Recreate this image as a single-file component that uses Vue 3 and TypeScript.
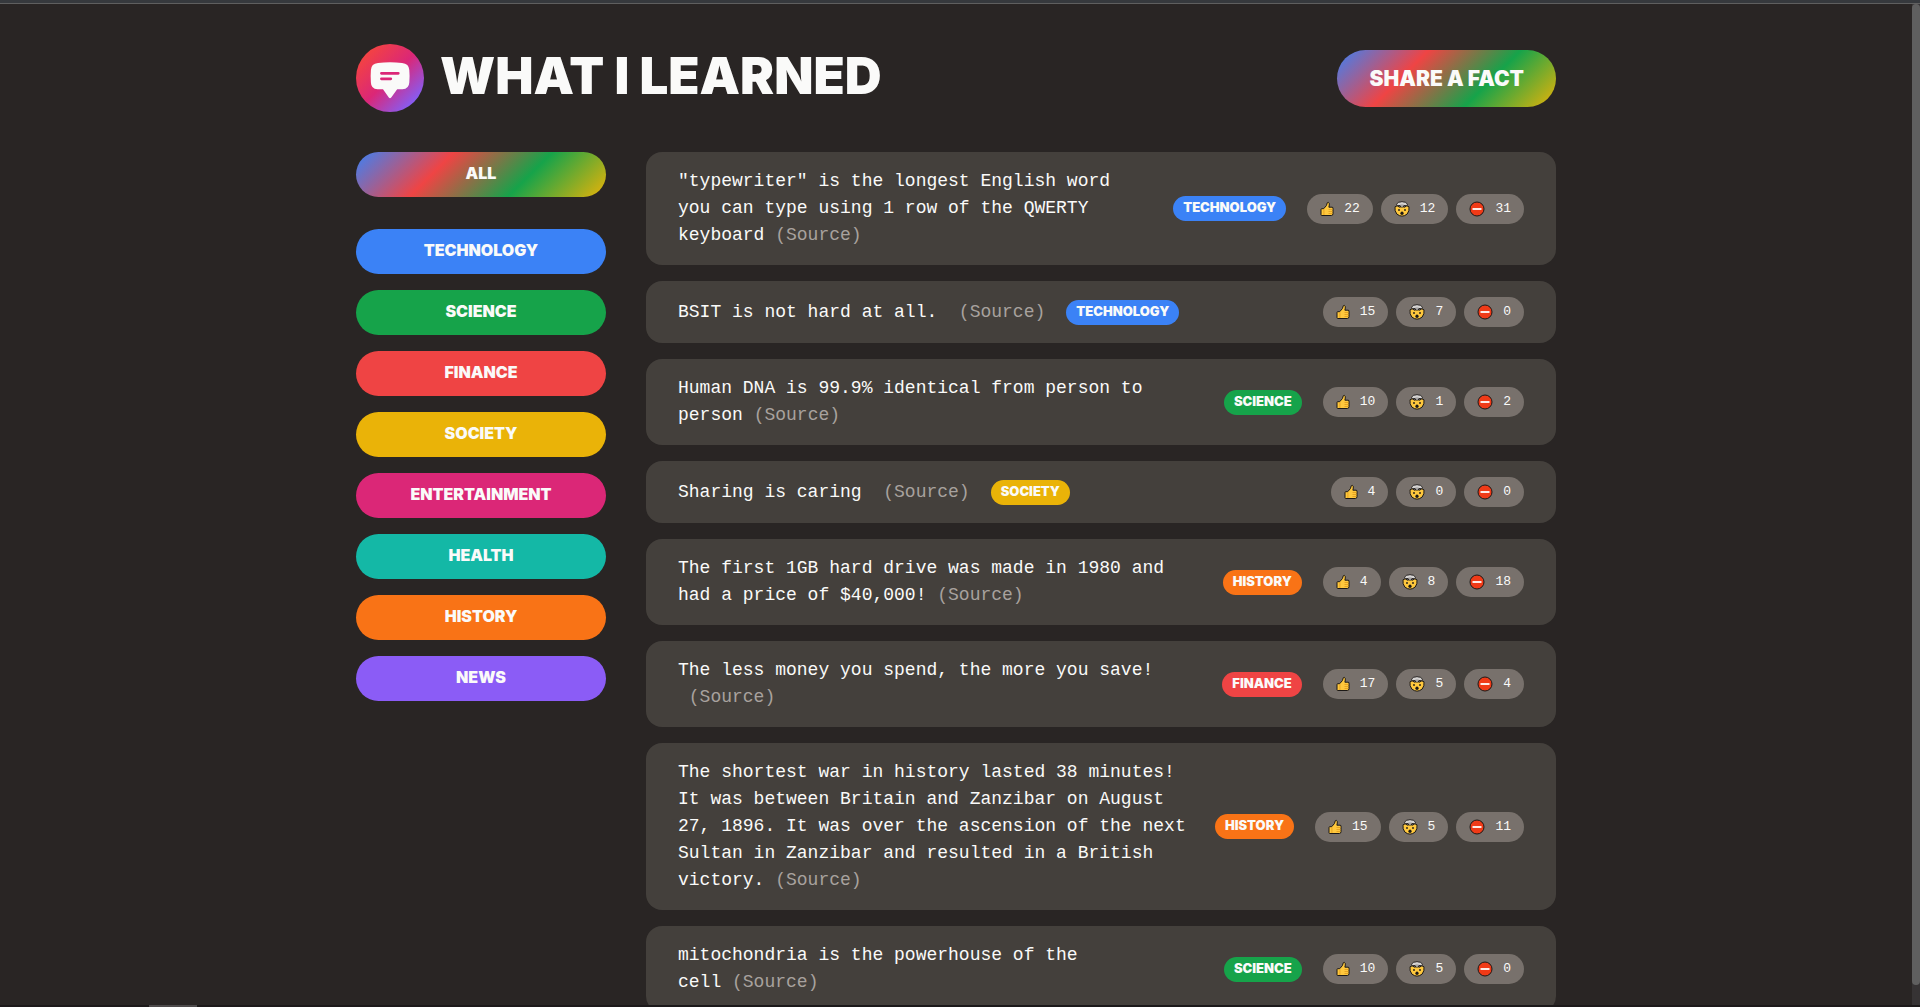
<script setup lang="ts">
import { computed, ref } from 'vue'

type VoteKind = 'like' | 'wow' | 'wrong'

interface Category {
  name: string
  color: string
}

interface Fact {
  id: number
  text: string
  category: string
  votes: Record<VoteKind, number>
}

const categories: Category[] = [
  { name: 'technology', color: '#3b82f6' },
  { name: 'science', color: '#16a34a' },
  { name: 'finance', color: '#ef4444' },
  { name: 'society', color: '#eab308' },
  { name: 'entertainment', color: '#db2777' },
  { name: 'health', color: '#14b8a6' },
  { name: 'history', color: '#f97316' },
  { name: 'news', color: '#8b5cf6' },
]

const kinds: { kind: VoteKind; label: string }[] = [
  { kind: 'like', label: 'Interesting' },
  { kind: 'wow', label: 'Mind-blowing' },
  { kind: 'wrong', label: 'False' },
]

const facts = ref<Fact[]>([
  {
    id: 1,
    text: '"typewriter" is the longest English word you\u00a0can type using 1 row of the QWERTY keyboard ',
    category: 'technology',
    votes: { like: 22, wow: 12, wrong: 31 },
  },
  { id: 2, text: 'BSIT is not hard at all. \u00a0', category: 'technology', votes: { like: 15, wow: 7, wrong: 0 } },
  {
    id: 3,
    text: 'Human DNA is 99.9% identical from person to person ',
    category: 'science',
    votes: { like: 10, wow: 1, wrong: 2 },
  },
  { id: 4, text: 'Sharing is caring \u00a0', category: 'society', votes: { like: 4, wow: 0, wrong: 0 } },
  {
    id: 5,
    text: 'The first 1GB hard drive was made in 1980 and had\u00a0a price of $40,000! ',
    category: 'history',
    votes: { like: 4, wow: 8, wrong: 18 },
  },
  {
    id: 6,
    text: 'The less money you spend, the more you save! \u00a0',
    category: 'finance',
    votes: { like: 17, wow: 5, wrong: 4 },
  },
  {
    id: 7,
    text: 'The shortest war in history lasted 38 minutes! It was between Britain and Zanzibar on August 27, 1896. It was over the ascension of the next Sultan in Zanzibar and resulted in a British victory. ',
    category: 'history',
    votes: { like: 15, wow: 5, wrong: 11 },
  },
  {
    id: 8,
    text: 'mitochondria is the powerhouse of the cell\u00a0',
    category: 'science',
    votes: { like: 10, wow: 5, wrong: 0 },
  },
])

const current = ref('all')
const visibleFacts = computed(() =>
  current.value === 'all' ? facts.value : facts.value.filter((f) => f.category === current.value),
)

function colorOf(name: string): string {
  return categories.find((c) => c.name === name)?.color ?? '#78716c'
}
</script>

<template>
  <div class="window">
    <div class="top-edge"></div>
    <div class="viewport">
      <div class="page">
        <div class="container">
          <header class="header">
            <div class="brand">
              <svg class="logo" viewBox="0 0 68 68" aria-hidden="true">
                <defs>
                  <linearGradient id="logo-fill" x1="0.12" y1="0.12" x2="0.88" y2="0.88">
                    <stop offset="0" stop-color="#f5443f" />
                    <stop offset="0.5" stop-color="#db2777" />
                    <stop offset="1" stop-color="#8160fb" />
                  </linearGradient>
                </defs>
                <circle cx="34" cy="34" r="34" fill="url(#logo-fill)" />
                <path
                  fill="#fafaf9"
                  d="M22 18.9Q34 17.700 46 18.900Q53 19.500 53.300 26Q53.900 32 53.300 38.500Q53 44.800 46.500 45.300H41.200L35.200 53.500Q34 55 32.800 53.500L27 45.300H21.500Q15 44.800 14.900 38.500Q14.400 32 14.900 26Q15.200 19.500 22 18.900Z"
                />
                <path stroke="#db2777" stroke-width="2.700" stroke-linecap="round" d="M25.400 29.300H42.300M25.400 34.800H34.800" />
              </svg>
              <h1>WHAT I LEARNED</h1>
            </div>
            <button type="button" class="rainbow share">SHARE A FACT</button>
          </header>

          <main class="main">
            <aside class="sidebar">
              <button type="button" class="rainbow pill" @click="current = 'all'">ALL</button>
              <ul class="category-list">
                <li v-for="c in categories" :key="c.name">
                  <button type="button" class="pill" :style="{ backgroundColor: c.color }" @click="current = c.name">
                    {{ c.name.toUpperCase() }}
                  </button>
                </li>
              </ul>
            </aside>

            <ul class="facts">
              <li v-for="f in visibleFacts" :key="f.id" class="fact">
                <p>{{ f.text }}<a href="#source">(Source)</a></p>
                <span class="tag" :style="{ backgroundColor: colorOf(f.category) }">{{ f.category.toUpperCase() }}</span>
                <div class="votes">
                  <button
                    v-for="k in kinds"
                    :key="k.kind"
                    type="button"
                    class="vote"
                    :aria-label="k.label"
                    @click="f.votes[k.kind]++"
                  >
                    <svg v-if="k.kind === 'like'" class="thumb" viewBox="0 0 14 16" aria-hidden="true">
                      <path
                        d="M1 8.500Q1 7.700 1.800 7.700H3.700L6.400 4.600L7.300 1.700Q8.400 .7 9.200 2.200Q9.600 3.700 8.900 6.200H12.100Q13.500 6.400 13 7.800V12.700Q13 14.500 11.300 14.500H1.800Q1 14.500 1 13.700Z"
                        fill="#ffc83d"
                        stroke="#1c1917"
                        stroke-linejoin="round"
                      />
                      <path d="M3.900 8.200V14M8.500 8.500H12.500M8.500 10.500H12.500M8.500 12.500H12.300" stroke="#e09b1c" stroke-width=".8" fill="none" />
                    </svg>
                    <svg v-else-if="k.kind === 'wow'" class="face" viewBox="0 0 16 16" aria-hidden="true">
                      <path
                        d="M1 5.800L3.200 4.800L5.500 6.200L8 5.200L10.500 6.200L12.800 4.800L15 5.800Q15.600 10 13.200 13Q8 17.300 2.800 13Q.4 10 1 5.800Z"
                        fill="#ffc83d"
                        stroke="#1c1917"
                        stroke-linejoin="round"
                      />
                      <path
                        d="M3.200 4.700Q1.900 3.500 3.500 2.300Q4.300 .7 6 1.100Q8 .1 10 1.100Q11.800 .7 12.500 2.300Q14.100 3.500 12.800 4.700L9.800 4.500L9.300 6H6.700L6.200 4.500Z"
                        fill="#d5d3d2"
                        stroke="#1c1917"
                        stroke-width=".9"
                      />
                      <path d="M6 3.600H10L8.700 4.300V6H7.300V4.300Z" fill="#9a9897" />
                      <circle cx="5" cy="9" r=".9" fill="#1c1917" />
                      <circle cx="11" cy="9" r=".9" fill="#1c1917" />
                      <ellipse cx="8" cy="12.300" rx="1.600" ry="1.700" fill="#1c1917" />
                    </svg>
                    <svg v-else class="face" viewBox="0 0 16 16" aria-hidden="true">
                      <circle cx="8" cy="8" r="7" fill="#f03a17" stroke="#1c1917" />
                      <path d="M3.500 8H12.500" stroke="#fff" stroke-width="1.800" />
                    </svg>
                    <span>{{ f.votes[k.kind] }}</span>
                  </button>
                </div>
              </li>
            </ul>
          </main>
        </div>
      </div>
      <div class="scroll-track"><div class="scroll-thumb"></div></div>
    </div>
    <div class="bottom-edge"><div class="bottom-mark"></div></div>
  </div>
</template>

<style>
body {
  background: #292524;
}
</style>

<style scoped>
.window {
  display: flex;
  flex-direction: column;
  height: 100vh;
  overflow: hidden;
  background: #292524;
  color: #fafaf9;
  font-family: 'Liberation Mono', monospace;
}

.top-edge {
  flex: none;
  height: 3px;
  background: #36393d;
  border-bottom: 1px solid #5f5f5f;
}

.viewport {
  display: flex;
  flex: 1;
  min-height: 0;
}

.page {
  flex: 1;
  overflow-y: auto;
  scrollbar-width: none;
}

.container {
  max-width: 1200px;
  margin: 0 auto;
  padding: 40px 0;
}

.header {
  display: flex;
  align-items: center;
  justify-content: space-between;
  margin-bottom: 40px;
}

.brand {
  display: flex;
  align-items: center;
  gap: 16px;
}

.logo {
  width: 68px;
  height: 68px;
}

h1 {
  margin: 0;
  padding-bottom: 4px;
  font: 900 51px/60px Inter, sans-serif;
}

button {
  border: none;
  color: inherit;
  cursor: pointer;
}

.rainbow {
  background: linear-gradient(135deg, #3b82f6, #ef4444, #16a34a, #eab308);
}

.share {
  padding: 16px 32px;
  border-radius: 100px;
  font: 900 21px/25px Inter, sans-serif;
}

.main {
  display: grid;
  grid-template-columns: 250px 1fr;
  gap: 40px;
  align-items: start;
}

.sidebar {
  display: flex;
  flex-direction: column;
  gap: 32px;
}

.pill {
  display: block;
  width: 100%;
  padding: 11px 16px 14px;
  border-radius: 100px;
  font: 900 16px/20px Inter, sans-serif;
}

.category-list,
.facts {
  display: grid;
  gap: 16px;
  margin: 0;
  padding: 0;
  list-style: none;
}

.fact {
  display: flex;
  align-items: center;
  gap: 21px;
  padding: 16px 32px;
  border-radius: 16px;
  background: #44403c;
}

.fact p {
  margin: 0;
  font-size: 18px;
  line-height: 27px;
}

.fact a {
  color: #a8a29e;
  text-decoration: none;
}

.tag {
  flex: none;
  padding: 2px 10px 5px;
  border-radius: 100px;
  font: 900 13px/18px Inter, sans-serif;
}

.votes {
  display: flex;
  flex: none;
  gap: 8px;
  margin-left: auto;
}

.vote {
  display: flex;
  align-items: center;
  gap: 10px;
  height: 30px;
  padding: 0 13px;
  border-radius: 100px;
  background: #78716c;
  font: 13px/18px 'Liberation Mono', monospace;
}

.thumb {
  width: 14px;
  height: 16px;
}

.face {
  width: 16px;
  height: 16px;
}

.scroll-track {
  flex: none;
  width: 8px;
  background: #363334;
}

.scroll-thumb {
  height: 98%;
  border-radius: 4px;
  background: #5f5f5f;
}

.bottom-edge {
  flex: none;
  height: 2px;
  padding-left: 149px;
  background: #1c191a;
}

.bottom-mark {
  width: 48px;
  height: 2px;
  background: #4d4a4b;
}
</style>
